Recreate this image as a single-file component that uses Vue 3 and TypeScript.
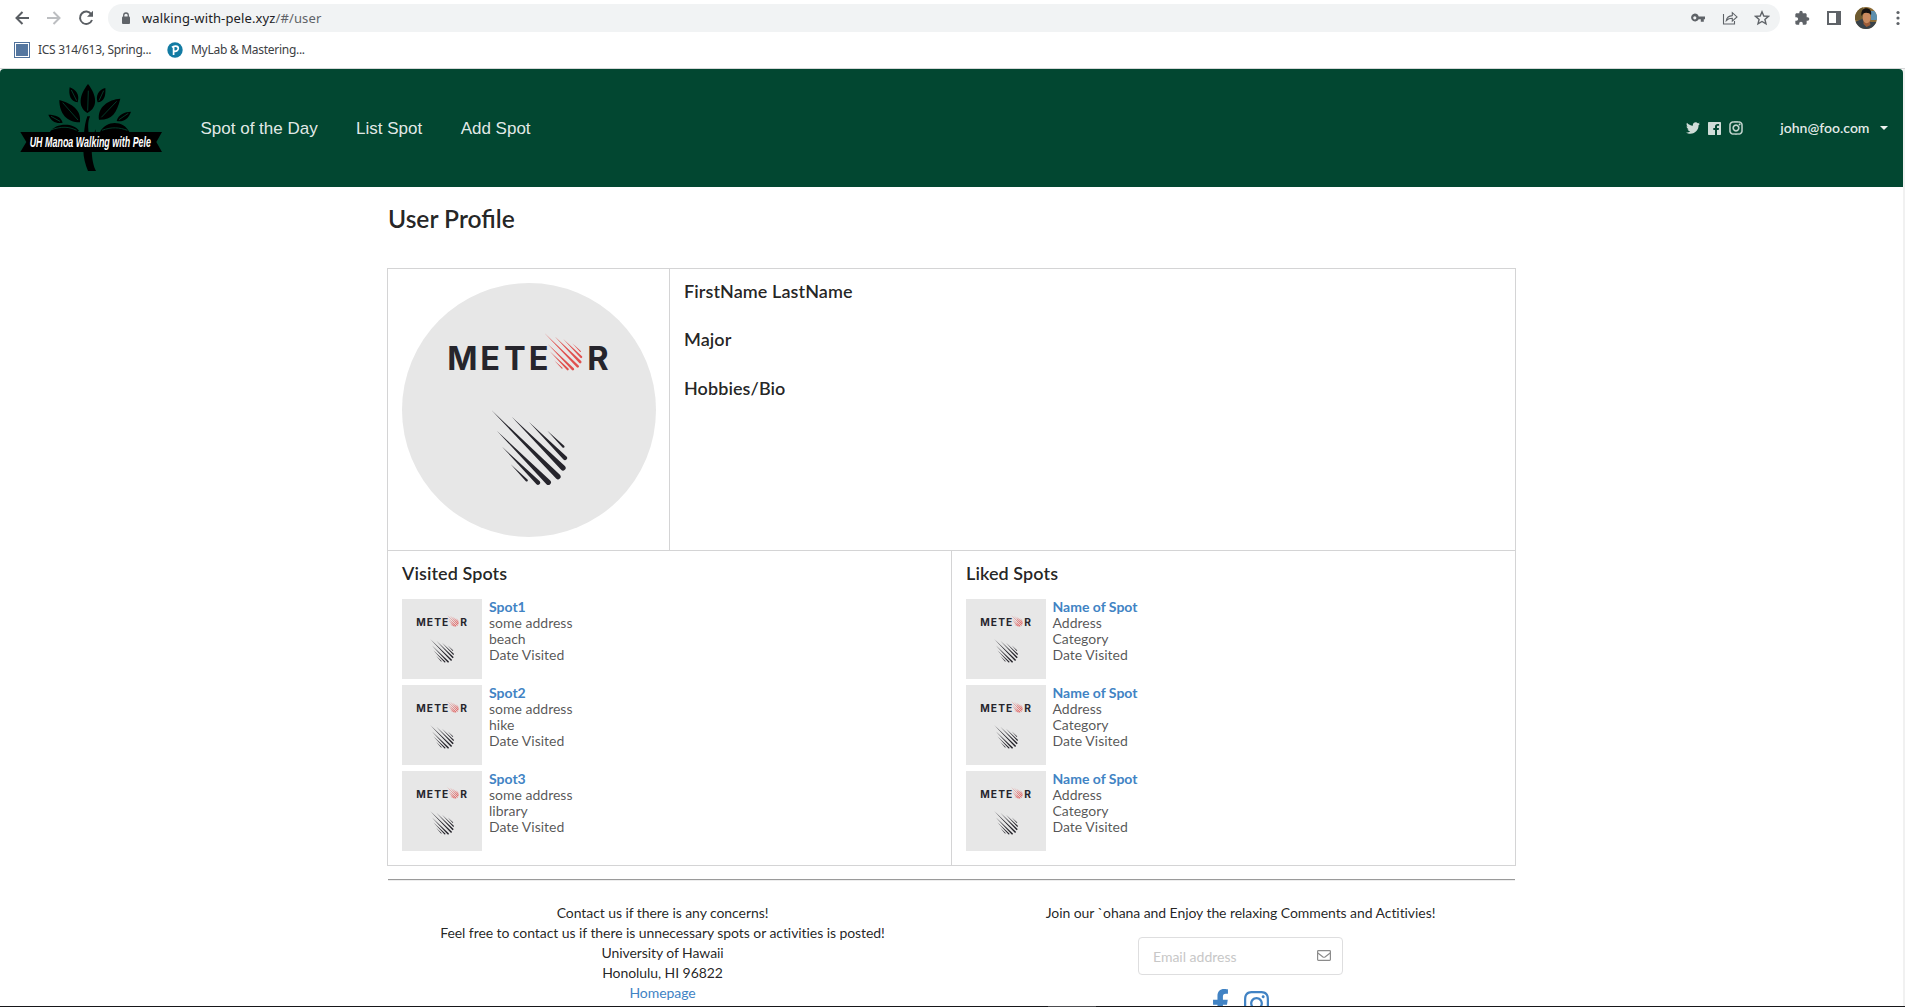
<script setup lang="ts">
import { h } from 'vue'

interface Spot {
  name: string
  address: string
  category: string
}

interface SpotColumn {
  title: string
  spots: Spot[]
}

const menu: string[] = ['Spot of the Day', 'List Spot', 'Add Spot']

const columns: SpotColumn[] = [
  {
    title: 'Visited Spots',
    spots: [
      { name: 'Spot1', address: 'some address', category: 'beach' },
      { name: 'Spot2', address: 'some address', category: 'hike' },
      { name: 'Spot3', address: 'some address', category: 'library' },
    ],
  },
  {
    title: 'Liked Spots',
    spots: [1, 2, 3].map(() => ({ name: 'Name of Spot', address: 'Address', category: 'Category' })),
  },
]

// Each streak runs diagonally from a thin tail to a round head: x, y, length, head radius.
const streaks: [number, number, number, number][] = [
  [34, 270, 200, 8],
  [95, 290, 154, 8],
  [147, 306, 108, 6.5],
  [202, 332, 48, 3.5],
  [51, 333, 154, 8],
  [66, 380, 108, 6.5],
  [92, 433, 48, 3.5],
]

const meteor: string = streaks
  .map(([x, y, l, r]) => {
    const o = r * 0.707
    const ex = x + l
    const ey = y + l
    return `M${x} ${y}L${ex + o} ${ey - o}A${r} ${r} 0 0 1 ${ex - o} ${ey + o}Z`
  })
  .join('')

// The Meteor picture, used for the portrait and for every spot thumbnail.
const MeteorCard = (props: { size: number }) =>
  h('svg', { width: props.size, height: props.size, viewBox: '0 0 254 254' }, [
    h('rect', { width: 254, height: 254, fill: '#e7e7e7' }),
    h(
      'text',
      { x: '45.3 78.3 102 126.8 185.3', y: 87.3, fill: '#26252c', 'font-family': 'Inter, sans-serif', 'font-weight': 700, 'font-size': 32.5 },
      'METER',
    ),
    h('path', { d: meteor, fill: '#26252c', transform: 'translate(78 37) scale(.3333)' }),
    h('path', { d: meteor, fill: '#e0504f', transform: 'translate(136.7 5) scale(.16667)' }),
  ])
MeteorCard.props = ['size']

const facebookF =
  'M279.14 288l14.22-92.66h-88.91v-60.13c0-25.35 12.42-50.06 52.24-50.06h40.42V6.26S260.43 0 225.36 0c-73.22 0-121.08 44.38-121.08 124.72v70.62H22.89V288h81.39v224h100.17V288z'
const instagram =
  'M224.1 141c-63.6 0-114.9 51.3-114.9 114.9s51.3 114.9 114.9 114.9S339 319.500 339 255.900 287.700 141 224.100 141zm0 189.600c-41.100 0-74.700-33.500-74.700-74.700s33.500-74.700 74.700-74.700 74.700 33.500 74.700 74.700-33.600 74.700-74.700 74.700zm146.400-194.300c0 14.900-12 26.800-26.800 26.800-14.900 0-26.800-12-26.800-26.800s12-26.800 26.800-26.800 26.800 12 26.800 26.800zm76.100 27.200c-1.700-35.900-9.900-67.700-36.200-93.900-26.200-26.200-58-34.400-93.900-36.200-37-2.100-147.900-2.100-184.900 0-35.800 1.700-67.600 9.900-93.900 36.100s-34.400 58-36.200 93.900c-2.100 37-2.100 147.900 0 184.900 1.700 35.900 9.900 67.700 36.200 93.900s58 34.400 93.900 36.200c37 2.100 147.900 2.100 184.900 0 35.900-1.700 67.700-9.900 93.900-36.200 26.200-26.200 34.400-58 36.200-93.900 2.100-37 2.100-147.800 0-184.800zM398.800 388c-7.800 19.600-22.900 34.700-42.600 42.600-29.500 11.700-99.500 9-132.100 9s-102.700 2.600-132.100-9c-19.600-7.800-34.700-22.900-42.600-42.600-11.700-29.500-9-99.500-9-132.100s-2.600-102.700 9-132.100c7.800-19.600 22.900-34.700 42.600-42.600 29.500-11.700 99.500-9 132.100-9s102.700-2.600 132.100 9c19.600 7.800 34.700 22.900 42.600 42.600 11.700 29.500 9 99.500 9 132.100s2.700 102.700-9 132.100z'
const twitter =
  'M459.370 151.716c.325 4.548.325 9.097.325 13.645 0 138.720-105.583 298.558-298.558 298.558-59.452 0-114.680-17.219-161.137-47.106 8.447.974 16.568 1.299 25.340 1.299 49.055 0 94.213-16.568 130.274-44.832-46.132-.975-84.792-31.188-98.112-72.772 6.498.974 12.995 1.624 19.818 1.624 9.421 0 18.843-1.300 27.614-3.573-48.081-9.747-84.143-51.980-84.143-102.985v-1.299c13.969 7.797 30.214 12.670 47.431 13.319-28.264-18.843-46.781-51.005-46.781-87.391 0-19.492 5.197-37.360 14.294-52.954 51.655 63.675 129.300 105.258 216.365 109.807-1.624-7.797-2.599-15.918-2.599-24.040 0-57.828 46.782-104.934 104.934-104.934 30.213 0 57.502 12.670 76.670 33.137 23.715-4.548 46.456-13.320 66.599-25.340-7.798 24.366-24.366 44.833-46.132 57.827 21.117-2.273 41.584-8.122 60.426-16.243-14.292 20.791-32.161 39.308-52.628 54.253z'
</script>

<template>
  <div class="page">
    <header class="browser">
      <div class="toolbar">
        <svg class="back" width="16" height="16" viewBox="0 0 16 16" fill="none" stroke="#5a5e63" stroke-width="2"><path d="M15 8H2.500M8.500 2L2.500 8l6 6" /></svg>
        <svg class="forward" width="16" height="16" viewBox="0 0 16 16" fill="none" stroke="#bcbec1" stroke-width="2"><path d="M1 8h12.500M7.500 2l6 6-6 6" /></svg>
        <svg class="reload" width="16" height="16" viewBox="0 0 16 16" fill="none"><path d="M13.300 4.200A6.200 6.200 0 1 0 14 10" stroke="#5a5e63" stroke-width="2" /><path d="M15 .8v6H9z" fill="#5a5e63" /></svg>
        <div class="address">
          <svg class="lock" width="10" height="13" viewBox="0 0 10 13"><rect x="1" y="4.500" width="8" height="7.500" rx="1" fill="#5f6368" /><path d="M2.700 5V3.300a2.300 2.300 0 0 1 4.600 0V5" fill="none" stroke="#5f6368" stroke-width="1.300" /></svg>
          <span class="url">walking-with-pele.xyz<i>/#/user</i></span>
          <svg class="key" width="16" height="12" viewBox="0 0 16 12"><path fill="#5f6368" fill-rule="evenodd" d="M4.800 1.500a4 4 0 0 1 3.900 3H15V7.300h-1.200v2.400h-3V7.300H8.700a4 4 0 1 1-3.900-5.800zm0 2.700a1.600 1.600 0 1 0 0 3.200 1.600 1.600 0 0 0 0-3.200z" /></svg>
          <svg class="share" width="16" height="16" viewBox="0 0 16 16" fill="none" stroke="#5f6368" stroke-width="1.100"><path d="M1.500 4v10h11v-3M4.300 10.500c.5-3 2.500-4.700 6-4.900V2.700l4.700 4.200-4.700 4.200V8.300c-2.600 0-4.500.6-6 2.200z" /></svg>
          <svg class="star" width="16" height="16" viewBox="0 0 16 16" fill="none" stroke="#5f6368" stroke-width="1.400"><path d="M8 1.800l1.800 4.200 4.600.4-3.500 3 1.100 4.500L8 11.500l-4 2.400 1.100-4.500-3.500-3 4.600-.4z" /></svg>
        </div>
        <svg class="puzzle" width="16" height="16" viewBox="0 0 24 24" fill="#5f6368"><path d="M20.500 11H19V7c0-1.100-.9-2-2-2h-4V3.500a2.500 2.500 0 0 0-5 0V5H4c-1.100 0-2 .9-2 2v3.800h1.500a2.700 2.700 0 0 1 0 5.400H2V20c0 1.100.9 2 2 2h3.800v-1.500a2.700 2.700 0 0 1 5.400 0V22H17c1.100 0 2-.9 2-2v-4h1.500a2.500 2.500 0 0 0 0-5z" /></svg>
        <svg class="panel" width="14" height="14" viewBox="0 0 14 14"><path fill="#5f6368" fill-rule="evenodd" d="M0 0h14v14H0zM2 2v10h7V2z" /></svg>
        <svg class="face" width="22" height="22" viewBox="0 0 22 22">
          <clipPath id="round"><circle cx="11" cy="11" r="11" /></clipPath>
          <g clip-path="url(#round)">
            <rect width="22" height="22" fill="#8a6a35" />
            <path d="M0 0h8v13H0z" fill="#6d5a30" /><path d="M16 4h6v9h-6z" fill="#5c8fae" />
            <path d="M0 15l7-3 9 3 6 0v7H0z" fill="#38424a" />
            <path d="M8.500 13h6l1 5-4 2-3-3z" fill="#9c5c38" />
            <ellipse cx="11.700" cy="10.500" rx="4" ry="5.700" fill="#c98a5e" />
            <path d="M6.500 9C5.500 3 9 .8 12 1.200s5 3 4 7c-1-2.500-6-3-8-1.500z" fill="#15120f" />
          </g>
        </svg>
        <svg class="dots" width="4" height="16" viewBox="0 0 4 16" fill="#5f6368"><circle cx="2" cy="2.500" r="1.600" /><circle cx="2" cy="8" r="1.600" /><circle cx="2" cy="13.500" r="1.600" /></svg>
      </div>
      <div class="bookmarks">
        <svg width="16" height="16" viewBox="0 0 16 16"><path fill="#50729c" fill-rule="evenodd" d="M0 0h16v16H0zM1 1v14h14V1z" /><path d="M2 2h12v12H2z" fill="#54769f" /></svg>
        <span class="first">ICS 314/613, Spring...</span>
        <svg class="pearson" width="16" height="16" viewBox="0 0 16 16"><circle cx="8" cy="8" r="7.700" fill="#127ba3" /><path d="M6.600 13V4.500M5 5.300C6.500 3.700 11.300 3.300 11.300 6.300c0 2.300-2.200 3.300-4 2.900" fill="none" stroke="#fff" stroke-width="1.700" /></svg>
        <span class="second">MyLab &amp; Mastering...</span>
      </div>
    </header>

    <div class="viewport">
      <div class="site">
        <nav class="navbar">
          <svg class="logo" width="142" height="88" viewBox="60 42 426 264">
            <path d="M264 42C238 75 232 110 262 129C296 112 290 75 264 42ZM209 52C205 75 212 95 233 97C240 75 228 58 209 52ZM316 54C318 78 312 96 293 97C286 78 296 58 316 54ZM178 90C178 130 200 157 240 157C245 120 215 100 178 90ZM361 86C350 130 335 150 297 149C292 112 325 88 361 86ZM145 134C152 153 170 163 188 158C184 140 165 134 145 134ZM393 125C385 148 370 156 350 153C355 133 375 125 393 125ZM150 186C165 160 218 156 237 182L230 188ZM300 186C320 148 372 152 388 186Z" />
            <path d="M262 139h8C262 158 265 175 266 190H252C254 170 256 155 262 139ZM250 240H275C276 268 280 288 288 303H264C256 284 250 262 250 240ZM282 190l5-12v12Z" />
            <path d="M265 62L263 122M214 60L230 92M311 62L297 92M188 98L234 150M350 94L304 142M153 139L180 154M385 130L357 149M152 180C185 168 208 170 230 181M306 181C335 170 358 172 382 181" fill="none" stroke="#024731" stroke-width="2.500" />
            <path d="M61 186H486L469 216L486 246H61L79 216Z" />
            <text x="89" y="232" textLength="364" lengthAdjust="spacingAndGlyphs">UH Manoa Walking with Pele</text>
          </svg>
          <a v-for="item in menu" :key="item" class="link">{{ item }}</a>
          <div class="right">
            <svg width="14" height="14" viewBox="0 0 512 512"><path :d="twitter" /></svg>
            <svg width="13" height="13" viewBox="0 0 13 13"><path fill-rule="evenodd" d="M.7 0h11.600a.7.7 0 0 1 .7.700v11.600a.7.7 0 0 1-.7.700H9V8h1.700l.3-2H9V4.700c0-.6.200-.9 1-.9h1.100V2a13 13 0 0 0-1.500-.1C8 1.900 7 2.800 7 4.500V6H5.300v2H7v5H.7a.7.700 0 0 1-.7-.7V.7A.7.700 0 0 1 .7 0z" /></svg>
            <svg width="14" height="14" viewBox="0 20 448 472"><path :d="instagram" stroke="#d0ddd8" stroke-width="12" /></svg>
            <span class="account">john@foo.com</span>
            <i class="caret"></i>
          </div>
        </nav>

        <main class="container">
          <h2>User Profile</h2>
          <section class="grid">
            <div class="row profile">
              <div class="cell photo"><MeteorCard class="portrait" :size="254" /></div>
              <div class="cell about">
                <h3>FirstName LastName</h3>
                <h3>Major</h3>
                <h3>Hobbies/Bio</h3>
              </div>
            </div>
            <div class="row">
              <div v-for="column in columns" :key="column.title" class="cell spots">
                <h3>{{ column.title }}</h3>
                <div v-for="(spot, i) in column.spots" :key="i" class="spot">
                  <MeteorCard class="thumb" :size="80" />
                  <div>
                    <a>{{ spot.name }}</a>
                    <p>{{ spot.address }}</p>
                    <p>{{ spot.category }}</p>
                    <p>Date Visited</p>
                  </div>
                </div>
              </div>
            </div>
          </section>
          <hr />
          <footer>
            <div class="contact">
              Contact us if there is any concerns!<br />
              Feel free to contact us if there is unnecessary spots or activities is posted!<br />
              University of Hawaii<br />
              Honolulu, HI 96822<br />
              <a>Homepage</a>
            </div>
            <div class="join">
              <span>Join our `ohana and Enjoy the relaxing Comments and Actitivies!</span>
              <div class="email">
                <span>Email address</span>
                <svg width="14" height="11" viewBox="0 0 14 11" fill="none" stroke="#8b8b8b" stroke-width="1.200"><rect x=".6" y=".6" width="12.800" height="9.800" rx=".8" /><path d="M.8 3L6 6.900q1 .7 2 0L13.200 3" /></svg>
              </div>
              <div class="social">
                <svg class="fb" width="15" height="28" viewBox="22 0 276 512" preserveAspectRatio="none"><path :d="facebookF" /></svg>
                <svg class="ig" width="25" height="25" viewBox="0 32 448 448"><path :d="instagram" /></svg>
              </div>
            </div>
          </footer>
        </main>
      </div>
    </div>
    <div class="edge"><i></i></div>
  </div>
</template>

<style>
html,
body {
  overflow: hidden;
}
</style>

<style scoped>
.page {
  display: flex;
  flex-direction: column;
  width: 1905px;
  height: 1007px;
  overflow: hidden;
  background: #fff;
  color: rgba(0, 0, 0, 0.87);
  font: 14px/20px Lato, sans-serif;
  font-variant-ligatures: none;
}
svg {
  display: block;
  flex: none;
}

/* Browser chrome */
.browser {
  flex: none;
  height: 68px;
  border-bottom: 1px solid #d5d7d8;
  font-family: "Noto Sans", sans-serif;
}
.toolbar {
  display: flex;
  align-items: center;
  height: 28px;
  padding-top: 4px;
}
.back {
  margin-left: 14px;
}
.forward {
  margin-left: 16px;
}
.reload {
  margin-left: 16px;
}
.address {
  display: flex;
  align-items: center;
  box-sizing: border-box;
  width: 1672px;
  height: 28px;
  margin-left: 14px;
  padding: 0 10px 0 13px;
  border-radius: 14px;
  background: #f1f3f4;
}
.url {
  margin: 0 auto 0 11px;
  color: #202124;
  font-size: 13px;
  letter-spacing: 0.12px;
  white-space: nowrap;
}
.url i {
  color: #5f6368;
  font-style: normal;
}
.share {
  margin-left: 16px;
}
.star {
  margin-left: 16px;
}
.puzzle {
  margin-left: 14px;
}
.panel {
  margin-left: 17px;
}
.face {
  margin-left: 14px;
}
.dots {
  margin-left: 19px;
}
.bookmarks {
  display: flex;
  align-items: center;
  height: 36px;
  padding-left: 14px;
  color: #3c4043;
  font-size: 12px;
  white-space: nowrap;
}
.first {
  width: 128px;
  margin-left: 8px;
  letter-spacing: -0.3px;
}
.second {
  margin-left: 8px;
  letter-spacing: -0.28px;
}
.pearson {
  margin-left: 1px;
}

/* Site header */
.viewport {
  flex: 1;
  min-height: 0;
  overflow: hidden;
  padding-right: 2px;
  background: #f1f1f1;
}
.site {
  height: 100%;
  background: #fff;
}
.navbar {
  display: flex;
  align-items: center;
  box-sizing: border-box;
  height: 118px;
  padding: 0 15px 0 20px;
  border-radius: 4px 4px 0 0;
  background: #024731;
}
.logo {
  margin-right: 38.500px;
  overflow: visible;
}
.logo text {
  fill: #fff;
  font: italic 700 46px "Liberation Sans Narrow", "Liberation Sans", sans-serif;
}
.link {
  margin-right: 38.400px;
  padding-top: 2px;
  color: rgba(255, 255, 255, 0.9);
  font: 17px/20px "Liberation Sans", sans-serif;
}
.right {
  display: flex;
  align-items: center;
  margin-left: auto;
  gap: 8px;
  fill: #d0ddd8;
}
.account {
  margin-left: 29.500px;
  color: rgba(255, 255, 255, 0.9);
  font-weight: 600;
}
.caret {
  margin-left: 2.500px;
  border: 4px solid transparent;
  border-top-color: #eef3f1;
  border-bottom: 0;
}

/* Profile */
.container {
  width: 1129px;
  margin-left: 387px;
}
h2,
h3 {
  margin: 0;
  font-weight: 600;
}
h2 {
  padding: 16px 0 34px 1px;
  font-size: 24.600px;
  font-variant-ligatures: normal;
  line-height: 31px;
}
h3 {
  font-size: 18px;
  letter-spacing: 0.08px;
  line-height: 23px;
}
.grid {
  border: 1px solid #d4d4d5;
}
.row {
  display: flex;
}
.row + .row {
  height: 314px;
  border-top: 1px solid #d4d4d5;
}
.profile {
  height: 281px;
}
.cell {
  box-sizing: border-box;
  padding: 0 14px;
}
.cell + .cell {
  border-left: 1px solid #d4d4d5;
}
.photo {
  width: 281px;
  padding-top: 14px;
}
.portrait {
  display: block;
  border-radius: 50%;
}
.thumb {
  display: block;
  flex: none;
}
.about {
  display: flex;
  flex-direction: column;
  flex: 1;
  padding-top: 10.500px;
  gap: 25.500px;
}
.spots {
  width: 563px;
  padding-top: 10.500px;
}
.spots + .spots {
  width: 564px;
}
.spots h3 {
  margin-bottom: 14.500px;
}
.spot {
  display: flex;
  gap: 7px;
  margin-bottom: 6px;
  color: rgba(0, 0, 0, 0.68);
  line-height: 16px;
}
.spots + .spots .spot {
  gap: 6.500px;
}
.spot p {
  margin: 0;
}
.spot a {
  display: block;
  font-weight: 700;
}
a {
  color: #4183c4;
}

/* Footer */
hr {
  height: 1px;
  margin: 13px 1px 22px;
  border: 0;
  border-top: 1px solid #9a9a9a;
  background: #ededed;
}
footer {
  display: flex;
  letter-spacing: -0.07px;
  text-align: center;
}
.contact {
  flex: none;
  width: 551px;
}
.join {
  display: flex;
  flex: none;
  flex-direction: column;
  align-items: center;
  width: 605px;
}
.email {
  display: flex;
  align-items: center;
  justify-content: space-between;
  box-sizing: border-box;
  width: 205px;
  height: 38px;
  margin-top: 14px;
  padding: 0 11px 0 14px;
  border: 1px solid #dededf;
  border-radius: 4px;
  color: #c7c7c7;
  letter-spacing: 0;
}
.email span {
  padding-top: 2px;
}
.email svg {
  margin-bottom: 1px;
}
.social {
  display: flex;
  gap: 16px;
  margin-top: 14px;
  padding-left: 1px;
  fill: #4183c4;
}
.ig {
  margin-top: 2px;
}
.edge {
  flex: none;
  height: 1px;
  background: #17171a;
}
.edge i {
  display: block;
  width: 48px;
  height: 1px;
  margin-left: 1048px;
  background: #4c4c4f;
}
</style>
